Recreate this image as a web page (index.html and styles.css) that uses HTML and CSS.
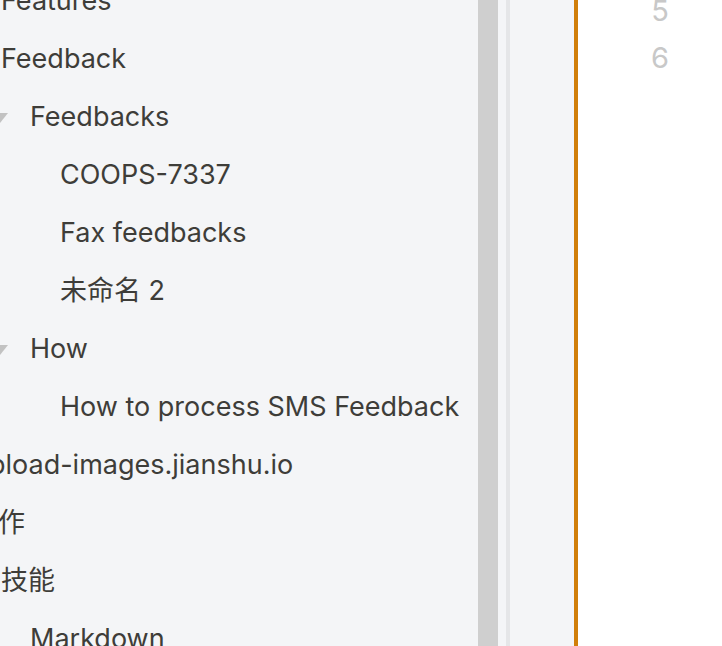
FILE: index.html
```html
<!DOCTYPE html>
<html>
<head>
<meta charset="utf-8">
<link rel="stylesheet" href="styles.css">
</head>
<body>
<div class="app">
  <div class="sidebar">
    <ul class="tree">
      <li class="row lv0">Features</li>
      <li class="row lv0">Feedback</li>
      <li class="row lv1"><span class="caret"></span>Feedbacks</li>
      <li class="row lv2">COOPS-7337</li>
      <li class="row lv2">Fax feedbacks</li>
      <li class="row lv2 cjk">未命名 2</li>
      <li class="row lv1"><span class="caret"></span>How</li>
      <li class="row lv2">How to process SMS Feedback</li>
      <li class="row lv0 shift">upload-images.jianshu.io</li>
      <li class="row lv0 shift-cjk cjk">工作</li>
      <li class="row lv0 cjk">技能</li>
      <li class="row lv1">Markdown</li>
    </ul>
  </div>
  <div class="scrollbar"></div>
  <div class="gutter"><div class="divider"></div></div>
  <div class="accent"></div>
  <div class="editor">
    <div class="lines">
      <div class="ln">5</div>
      <div class="ln">6</div>
    </div>
  </div>
</div>
</body>
</html>
```
FILE: styles.css
```css
html, body {
  margin: 0;
  padding: 0;
  height: 100%;
  overflow: hidden;
}
body {
  font-family: Inter, "Noto Sans CJK SC", sans-serif;
  background: #ffffff;
}
.app {
  display: flex;
  height: 646px;
}
.sidebar {
  width: 478px;
  background: #f4f5f7;
  overflow: hidden;
}
.tree {
  list-style: none;
  margin: -29px 0 0 0;
  padding: 0;
}
.row {
  height: 58px;
  box-sizing: border-box;
  display: flex;
  align-items: center;
  font-size: 27px;
  color: #3e3d39;
  white-space: nowrap;
  position: relative;
}
.cjk { padding-bottom: 4px; }
.lv0 { padding-left: 1px; }
.lv1 { padding-left: 30px; }
.lv2 { padding-left: 60px; }
.shift { margin-left: -28px; }
.shift-cjk { margin-left: -30px; }
.caret {
  position: absolute;
  left: -8px;
  top: 26px;
  width: 0;
  height: 0;
  border-left: 8px solid transparent;
  border-right: 8px solid transparent;
  border-top: 10px solid #c2c2c2;
}
.scrollbar {
  width: 20px;
  background: #cfcfcf;
}
.gutter {
  width: 76px;
  background: #f4f5f7;
  padding-left: 8px;
  box-sizing: border-box;
}
.divider {
  width: 4px;
  height: 100%;
  background: #e5e6e8;
}
.accent {
  width: 4px;
  background: #d17f0a;
}
.editor {
  flex: 1;
  background: #ffffff;
}
.lines {
  width: 91px;
  margin-top: -18px;
  text-align: right;
}
.ln {
  height: 47px;
  line-height: 58px;
  font-size: 29px;
  color: #c8c8c8;
}
```
